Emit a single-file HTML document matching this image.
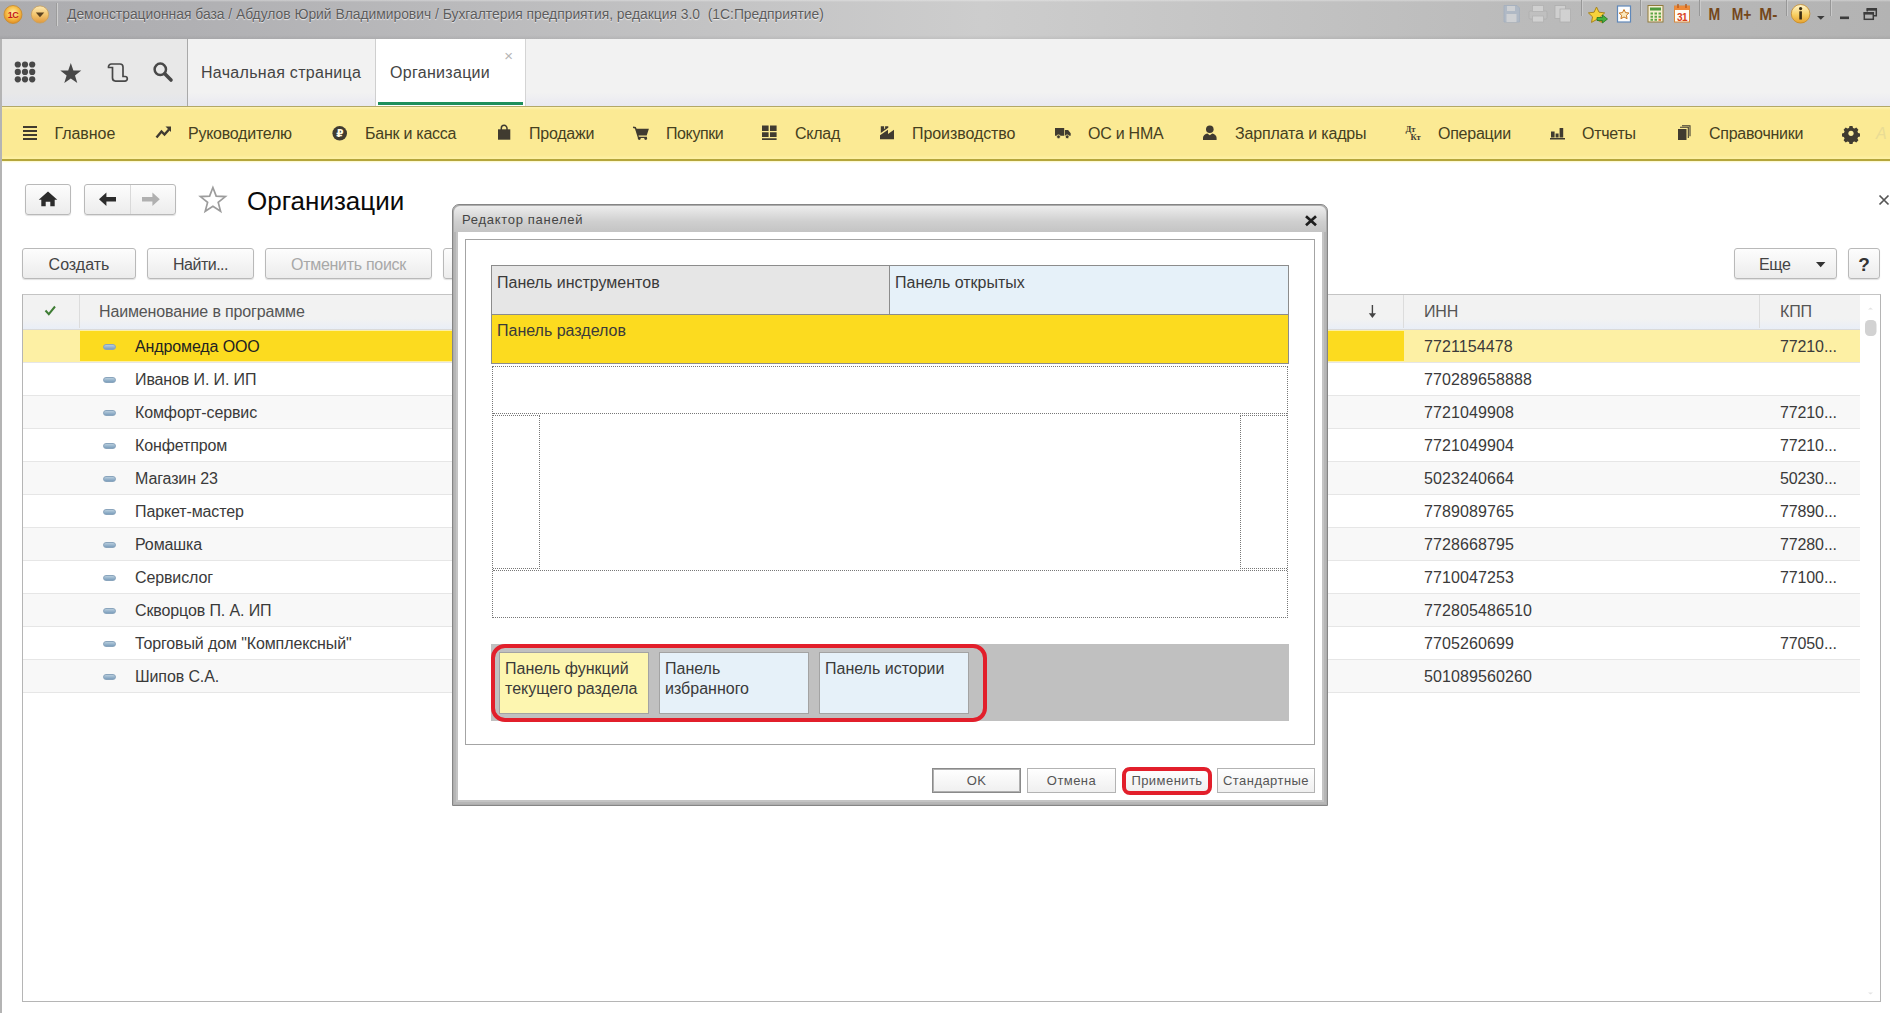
<!DOCTYPE html>
<html lang="ru">
<head>
<meta charset="utf-8">
<title>Организации</title>
<style>
*{box-sizing:border-box;margin:0;padding:0}
html,body{width:1890px;height:1013px;overflow:hidden;background:#fff}
body{font-family:"Liberation Sans",Arial,sans-serif;font-size:16px;color:#333;position:relative}
.abs{position:absolute}
/* title bar */
#titlebar{position:absolute;left:0;top:0;width:1890px;height:39px;background:linear-gradient(rgba(255,255,255,.35),rgba(255,255,255,0) 2px,rgba(0,0,0,0) 35px,rgba(0,0,0,.06)),linear-gradient(to right,#acacaf 0,#b0b0b3 10%,#cdcdcd 52%,#bbbbbb 80%,#b3b3b3 100%);}
#titlebar .t{position:absolute;left:67px;top:6px;font-size:13.85px;line-height:16px;color:#5c5c5c;text-shadow:0 1px 1px rgba(255,255,255,.75);white-space:nowrap}
/* tabs bar */
#tabsbar{position:absolute;left:0;top:39px;width:1890px;height:67px;background:linear-gradient(#f2f2f2 80%,#e9e9f1)}
#leftborder{position:absolute;left:0;top:39px;width:2px;height:974px;background:#b4b4b4}
#tools{position:absolute;left:2px;top:39px;width:186px;height:67px;background:linear-gradient(#e8e8e8 80%,#e3e5ec);border-right:1px solid #a9a9a9}
.tab{position:absolute;top:39px;height:67px;font-size:16px;color:#444;line-height:67px;white-space:nowrap;letter-spacing:.3px}
#tab1{left:188px;width:188px;padding-left:13px;border-right:1px solid #cfcfcf}
#tab2{left:376px;width:150px;background:#fff;padding-left:14px;border-right:1px solid #d4d4d4}
#tab2 .ul{position:absolute;left:2px;right:2px;bottom:1px;height:3px;background:#1e8f5c}
#tab2 .x{position:absolute;right:12px;top:9px;font-size:15px;line-height:15px;color:#b5b5b5;letter-spacing:0}
/* sections */
#sections{position:absolute;left:2px;top:106px;width:1888px;height:55px;background:linear-gradient(#fdf3b4,#fbea94 3px,#fbea94 48px,#fdf0a2 51px);border-top:1px solid #b3a866;border-bottom:2px solid #b5a63c;box-shadow:0 1px 0 #fdf9d2,0 2px 0 #fffef0}
.sec{position:absolute;top:17px;font-size:16px;color:#45401f;white-space:nowrap;line-height:20px;letter-spacing:-.25px}
.sic{position:absolute;top:0;height:54px}
/* content */
.btn{position:absolute;height:31px;border:1px solid #b9b9b9;border-radius:3px;background:linear-gradient(#fdfdfd,#ececec);font-size:16px;color:#444;text-align:center;line-height:31px;box-shadow:0 1px 1px rgba(0,0,0,.12)}
.btn.dis{color:#a8a8a8}
#h1{position:absolute;left:247px;top:185px;font-size:26px;color:#0a0a0a;line-height:32px}
/* table */
#tbl{position:absolute;left:22px;top:294px;width:1859px;height:708px;border:1px solid #b5b5b5;border-top-color:#c4c4c4;background:#fff}
#thead{position:absolute;left:0;top:0;width:1837px;height:35px;background:linear-gradient(#f2f2f2 70%,#e9eef7);border-bottom:1px solid #dadada}
.th{position:absolute;top:0;height:33px;line-height:33px;color:#555;font-size:16px;white-space:nowrap;letter-spacing:-.15px}
.vsep{position:absolute;top:0;width:1px;height:33px;background:#dcdcdc}
.row{position:absolute;left:0;width:1837px;height:33px;border-bottom:1px solid #e6e6e6;font-size:16px;color:#3a3a3a;line-height:34px;white-space:nowrap;letter-spacing:-.12px}
.row.alt{background:#f8f8f8}
.row span{position:absolute;top:0}
.row .n{left:112px}.row .i{left:1401px;letter-spacing:.1px}.row .k{left:1757px}
.row .ic{left:80px;top:14px;width:13px;height:6px;border-radius:3px;background:linear-gradient(#b7cddd,#7d9fbd);border:1px solid #8aa5bd}
/* dialog */
#dlg{position:absolute;left:452px;top:204px;width:876px;height:602px;border-radius:7px 7px 0 0;background:#fff;border:1px solid #858585;box-shadow:inset 0 0 0 1px #adadad, inset 0 0 0 3px #b6b6b6, inset 0 0 0 5px #c4c4c4}
#dlgtitle{position:absolute;left:1px;top:1px;right:1px;height:26px;border-radius:6px 6px 0 0;background:linear-gradient(#ededed,#cfcfcf 60%,#c4c4c4);}
#dlgtitle .t{position:absolute;left:8px;top:6px;font-size:13px;color:#444;line-height:16px;letter-spacing:.7px}
#dlgbody{position:absolute;left:5px;top:29px;right:5px;bottom:5px;background:#fff}
#frame{position:absolute;left:465px;top:239px;width:850px;height:506px;border:1px solid #a4a4a4;background:#fff}
.pn{position:absolute;font-size:16px;color:#3a3a3a;line-height:20px;padding:7px 0 0 5px}
.dot{position:absolute;border:1px dotted #777}
.db{position:absolute;top:768px;height:25px;border:1px solid #b3b3b3;background:linear-gradient(#fff,#efefef);font-size:13px;color:#555;text-align:center;line-height:24px;letter-spacing:.45px;white-space:nowrap}
.red{position:absolute;border:4px solid #e21f2b;border-radius:14px}
</style>
</head>
<body>
<div id="titlebar"><div class="t">Демонстрационная база / Абдулов Юрий Владимирович / Бухгалтерия предприятия, редакция 3.0&nbsp; (1С:Предприятие)</div></div>
<div id="tabsbar"></div>
<div id="tools"></div>
<div class="tab" id="tab1">Начальная страница</div>
<div class="tab" id="tab2">Организации<span class="x">×</span><span class="ul"></span></div>
<div id="sections">
<span class="sec" style="left:52.500px;letter-spacing:-.05px">Главное</span>
<span class="sec" style="left:186px">Руководителю</span>
<span class="sec" style="left:363px">Банк и касса</span>
<span class="sec" style="left:527px">Продажи</span>
<span class="sec" style="left:664px;letter-spacing:-.4px">Покупки</span>
<span class="sec" style="left:793px">Склад</span>
<span class="sec" style="left:910px;letter-spacing:-.08px">Производство</span>
<span class="sec" style="left:1086px">ОС и НМА</span>
<span class="sec" style="left:1233px;letter-spacing:-.15px">Зарплата и кадры</span>
<span class="sec" style="left:1436px">Операции</span>
<span class="sec" style="left:1580px">Отчеты</span>
<span class="sec" style="left:1707px">Справочники</span>
</div>
<div id="leftborder"></div>

<div class="btn" style="left:25px;top:184px;width:46px"></div>
<div class="btn" style="left:84px;top:184px;width:92px"></div>
<div id="h1">Организации</div>

<div class="btn" style="left:22px;top:248px;width:114px">Создать</div>
<div class="btn" style="left:147px;top:248px;width:107px;letter-spacing:-.5px">Найти...</div>
<div class="btn dis" style="left:265px;top:248px;width:167px;letter-spacing:-.3px">Отменить поиск</div>
<div class="btn" style="left:443px;top:248px;width:40px"></div>
<div class="btn" style="left:1734px;top:248px;width:103px;text-align:left;padding-left:24px;letter-spacing:-.3px">Еще</div>
<div class="btn" style="left:1848px;top:248px;width:32px;font-weight:bold;font-size:19px;color:#333">?</div>

<div id="tbl">
 <div id="thead">
  <div class="th" style="left:76px">Наименование в программе</div>
  <div class="th" style="left:1401px">ИНН</div>
  <div class="th" style="left:1757px">КПП</div>
  <div class="vsep" style="left:56px"></div>
  <div class="vsep" style="left:1380px"></div>
  <div class="vsep" style="left:1736px"></div>
 </div>
 <div class="row" style="top:35px;background:#fdf0a4"><div class="abs" style="left:57px;top:1px;width:1324px;height:30px;background:#fcdb1f"></div><span class="ic"></span><span class="n" style="color:#222">Андромеда ООО</span><span class="i">7721154478</span><span class="k">77210...</span></div>
 <div class="row" style="top:68px"><span class="ic"></span><span class="n">Иванов И. И. ИП</span><span class="i">770289658888</span></div>
 <div class="row alt" style="top:101px"><span class="ic"></span><span class="n">Комфорт-сервис</span><span class="i">7721049908</span><span class="k">77210...</span></div>
 <div class="row" style="top:134px"><span class="ic"></span><span class="n">Конфетпром</span><span class="i">7721049904</span><span class="k">77210...</span></div>
 <div class="row alt" style="top:167px"><span class="ic"></span><span class="n">Магазин 23</span><span class="i">5023240664</span><span class="k">50230...</span></div>
 <div class="row" style="top:200px"><span class="ic"></span><span class="n">Паркет-мастер</span><span class="i">7789089765</span><span class="k">77890...</span></div>
 <div class="row alt" style="top:233px"><span class="ic"></span><span class="n">Ромашка</span><span class="i">7728668795</span><span class="k">77280...</span></div>
 <div class="row" style="top:266px"><span class="ic"></span><span class="n">Сервислог</span><span class="i">7710047253</span><span class="k">77100...</span></div>
 <div class="row alt" style="top:299px"><span class="ic"></span><span class="n">Скворцов П. А. ИП</span><span class="i">772805486510</span></div>
 <div class="row" style="top:332px"><span class="ic"></span><span class="n">Торговый дом "Комплексный"</span><span class="i">7705260699</span><span class="k">77050...</span></div>
 <div class="row alt" style="top:365px"><span class="ic"></span><span class="n">Шипов С.А.</span><span class="i">501089560260</span></div>
</div>

<div id="dlg"><div id="dlgtitle"><span class="t">Редактор панелей</span></div></div>
<div id="frame"></div>
<div class="pn" style="left:491px;top:265px;width:399px;height:50px;background:#e6e6e6;border:1px solid #8c8c8c">Панель инструментов</div>
<div class="pn" style="left:889px;top:265px;width:400px;height:50px;background:#e6f1f9;border:1px solid #8c8c8c">Панель открытых</div>
<div class="pn" style="left:491px;top:314px;width:798px;height:50px;background:#fcdb1f;border:1px solid #8c8c8c;padding-top:6px">Панель разделов</div>
<div class="dot" style="left:492px;top:366px;width:796px;height:252px"></div>
<div class="dot" style="left:493px;top:415px;width:47px;height:154px;border-left:none"></div>
<div class="dot" style="left:493px;top:413px;width:794px;height:158px;border-left:none;border-right:none"></div>
<div class="dot" style="left:1240px;top:415px;width:47px;height:154px;border-right:none"></div>

<div class="abs" style="left:491px;top:644px;width:798px;height:77px;background:#c0c0c0"></div>
<div class="pn" style="left:499px;top:652px;width:150px;height:62px;background:#fdf6b0;border:1px solid #a3a3a3;padding-top:6px">Панель функций<br>текущего раздела</div>
<div class="pn" style="left:659px;top:652px;width:150px;height:62px;background:#e6f1f9;border:1px solid #a3a3a3;padding-top:6px">Панель<br>избранного</div>
<div class="pn" style="left:819px;top:652px;width:150px;height:62px;background:#e6f1f9;border:1px solid #a3a3a3;padding-top:6px">Панель истории</div>
<div class="red" style="left:491px;top:644px;width:496px;height:78px"></div>
<div class="db" style="left:932px;width:89px;border-color:#8a8a8a;box-shadow:inset 0 0 0 1px #b0b0b0">OK</div>
<div class="db" style="left:1027px;width:89px">Отмена</div>
<div class="db" style="left:1125px;width:84px">Применить</div>
<div class="db" style="left:1217px;width:98px">Стандартные</div>
<div class="red" style="left:1122px;top:767px;width:90px;height:28px;border-radius:8px"></div>

<svg id="icons" width="1890" height="1013" viewBox="0 0 1890 1013" style="position:absolute;left:0;top:0;pointer-events:none">
<defs>
 <radialGradient id="g1c" cx="50%" cy="40%" r="60%"><stop offset="0" stop-color="#fff0a8"/><stop offset=".55" stop-color="#f8c04a"/><stop offset="1" stop-color="#e08c22"/></radialGradient>
 <linearGradient id="gdd" x1="0" y1="0" x2="0" y2="1"><stop offset="0" stop-color="#fdeab4"/><stop offset=".5" stop-color="#f3c670"/><stop offset="1" stop-color="#e0983c"/></linearGradient>
 <linearGradient id="ginf" x1="0" y1="0" x2="0" y2="1"><stop offset="0" stop-color="#fff6cf"/><stop offset=".55" stop-color="#f7cf63"/><stop offset="1" stop-color="#e6a230"/></linearGradient>
</defs>
<!-- title bar: logo + dropdown -->
<g id="tb-left">
 <circle cx="13" cy="14.5" r="9" fill="url(#g1c)" stroke="#c98a2a" stroke-width=".8"/>
 <text x="13" y="18" font-family="Liberation Sans,sans-serif" font-size="9" font-weight="bold" fill="#c4161c" text-anchor="middle" letter-spacing="-.5">1С</text>
 <circle cx="40" cy="14.5" r="8.6" fill="url(#gdd)" stroke="#c9a05a" stroke-width=".8"/>
 <path d="M35.8 12.6h8.4l-4.2 4.6z" fill="#5b4322"/>
 <path d="M56.5 3v23" stroke="#9c9c9c" stroke-width="1"/><path d="M57.5 3v23" stroke="#cfcfcf" stroke-width="1"/>
</g>
<!-- title bar right icons -->
<g id="tb-right">
 <g opacity=".38">
  <path d="M1504 5.5h13l2.5 2.500v14h-15.5z" fill="#9fb6d6" stroke="#7f9cc4" stroke-width=".8"/><rect x="1507" y="6" width="8" height="5" fill="#eef3fa"/><rect x="1506.500" y="14" width="10" height="8" fill="#eef3fa"/>
  <rect x="1529" y="11" width="18" height="8" rx="1.5" fill="#c9c9c9" stroke="#9a9a9a" stroke-width=".8"/><rect x="1532.500" y="5.500" width="11" height="6" fill="#f4f4f4" stroke="#a5a5a5" stroke-width=".8"/><rect x="1532.500" y="16" width="11" height="6" fill="#f7f7f7" stroke="#a5a5a5" stroke-width=".8"/>
  <rect x="1555" y="5.500" width="10.500" height="13" fill="#f2f2f2" stroke="#9c9c9c" stroke-width=".8"/><rect x="1560" y="9" width="10.500" height="13" fill="#f7f7f7" stroke="#9c9c9c" stroke-width=".8"/>
 </g>
 <path d="M1581.500 0v16M1640.500 0v16M1699.500 0v16M1786.500 0v16M1830.500 0v16" stroke="#979797" stroke-width="1"/>
 <path d="M1582.500 0v16M1641.500 0v16M1700.500 0v16M1787.500 0v16M1831.500 0v16" stroke="#d2d2d2" stroke-width="1" opacity=".7"/>
 <!-- star + green arrow -->
 <path d="M1596.500 7l2.500 5.200 5.700.7-4.200 3.900 1.100 5.600-5.100-2.800-5 2.800 1-5.600-4.100-3.900 5.700-.7z" fill="#f6d23a" stroke="#a8841c" stroke-width="1"/>
 <path d="M1597 17.500h5.500v-2.500l5 4-5 4v-2.500h-5.500z" fill="#46b03c" stroke="#22761c" stroke-width=".8"/>
 <!-- favourites doc -->
 <rect x="1617.500" y="6" width="13" height="16" fill="#fdfdfd" stroke="#5f88ba" stroke-width="1.200"/>
 <path d="M1624 9.500l1.500 3.100 3.400.4-2.500 2.300.7 3.400-3.100-1.700-3.100 1.700.7-3.400-2.500-2.300 3.400-.4z" fill="#fbe9c0" stroke="#c9761e" stroke-width="1"/>
 <!-- calculator -->
 <rect x="1648" y="5.500" width="15" height="16.500" fill="#f6eed0" stroke="#8f7a3c" stroke-width="1"/>
 <rect x="1650" y="7.500" width="11" height="3" fill="#4f9a3c"/>
 <path d="M1650.500 12.500h2.500v2h-2.500zM1654.500 12.500h2.500v2h-2.500zM1658.500 12.500h2.500v2h-2.500zM1650.500 15.700h2.500v2h-2.500zM1654.500 15.700h2.500v2h-2.500zM1658.500 15.700h2.500v2h-2.500zM1650.500 18.800h2.500v2h-2.500zM1654.500 18.800h2.500v2h-2.500z" fill="#5da545"/><path d="M1658.500 18.800h2.500v2h-2.500z" fill="#d8702a"/>
 <!-- calendar -->
 <rect x="1674.500" y="6" width="15" height="16" fill="#fffdf6" stroke="#d9883a" stroke-width="1"/>
 <rect x="1674.500" y="6" width="15" height="4" fill="#ee8a3a"/>
 <path d="M1678 4v4M1686 4v4" stroke="#b85a1a" stroke-width="1.400"/>
 <text x="1682" y="20.500" font-family="Liberation Sans,sans-serif" font-size="10" font-weight="bold" fill="#d8401c" text-anchor="middle" letter-spacing="-.6">31</text>
 <!-- M M+ M- -->
 <g font-family="Liberation Sans,sans-serif" font-size="16" font-weight="bold" fill="#74471b">
  <text x="1708.500" y="20" textLength="11.700" lengthAdjust="spacingAndGlyphs">M</text><text x="1731.800" y="20" textLength="19.600" lengthAdjust="spacingAndGlyphs">M+</text><text x="1759.300" y="20" textLength="18" lengthAdjust="spacingAndGlyphs">M-</text>
 </g>
 <!-- info -->
 <circle cx="1800.600" cy="13.800" r="9.300" fill="url(#ginf)" stroke="#c58a28" stroke-width=".8"/>
 <circle cx="1800.600" cy="8.600" r="1.600" fill="#3a2c14"/><rect x="1799.300" y="11.300" width="2.600" height="8.200" fill="#3a2c14"/>
 <path d="M1817 16h7.600l-3.800 3.800z" fill="#3c3c3c"/>
 <rect x="1840" y="16.500" width="9" height="2.600" fill="#3c3c3c"/>
 <path d="M1867.300 11.500v-2.700h9v7h-2.500" fill="none" stroke="#3c3c3c" stroke-width="1.500"/><path d="M1866.600 8.500h10.400v2.200h-10.400z" fill="#3c3c3c"/>
 <rect x="1864.300" y="12.800" width="9" height="6.500" fill="none" stroke="#3c3c3c" stroke-width="1.500"/><path d="M1863.600 12h10.400v2.600h-10.400z" fill="#3c3c3c"/>
</g>
<!-- tools -->
<g id="tools-ic" fill="#484848">
 <g><circle cx="17.800" cy="64.500" r="3.100"/><circle cx="25" cy="64.500" r="3.100"/><circle cx="32.200" cy="64.500" r="3.100"/><circle cx="17.800" cy="71.900" r="3.100"/><circle cx="25" cy="71.900" r="3.100"/><circle cx="32.200" cy="71.900" r="3.100"/><circle cx="17.800" cy="79.300" r="3.100"/><circle cx="25" cy="79.300" r="3.100"/><circle cx="32.200" cy="79.300" r="3.100"/></g>
 <path d="M70.800 63l2.600 7.400 7.900.2-6.300 4.800 2.300 7.600-6.500-4.500-6.500 4.500 2.300-7.600-6.300-4.800 7.900-.2z"/>
 <path d="M108.500 67.500a3 3 0 0 1 3-3.500h8.500a3 3 0 0 1 3 3v9.500h2a2.300 2.300 0 0 1 0 4.600h-9.500a3 3 0 0 1-3-3v-10.600z" fill="none" stroke="#484848" stroke-width="1.700"/>
 <circle cx="160.300" cy="69.300" r="5.700" fill="none" stroke="#484848" stroke-width="2.500"/>
 <path d="M164.800 73.800l6.200 6.200" stroke="#484848" stroke-width="3.600" stroke-linecap="round"/>
</g>
<!-- sections icons -->
<g id="sec-ic" fill="#403b30">
 <path d="M23 126h14v2h-14zM23 130h14v2h-14zM23 134h14v2h-14zM23 138h14v2h-14z"/>
 <path d="M156.500 137.500l5-6 3 3 4.500-5" fill="none" stroke="#403b30" stroke-width="2.400"/><path d="M165.500 126.500h5.500v5.500z"/>
 <circle cx="339.700" cy="133.300" r="7.300"/>
 <text x="339.800" y="137.300" font-family="DejaVu Sans,Liberation Sans,sans-serif" font-size="10.500" font-weight="bold" fill="#fffbe6" text-anchor="middle">₽</text>
 <path d="M498 129.300h12.300v10.400h-12.300z"/><path d="M501.300 130.500v-2.300a2.850 2.850 0 0 1 5.700 0v2.300" fill="none" stroke="#403b30" stroke-width="1.500"/>
 <path d="M633.200 126.400l2.600.7.800 1.700h12.300l-2.200 6.700h-8.200l.4 1.200h8v1.300h-9l-3-9.500-2-.6z"/><circle cx="639.300" cy="138.600" r="1.400"/><circle cx="645.700" cy="138.600" r="1.400"/>
 <path d="M762 125.500h6.600v5.500h-6.600zM770 125.500h6.600v5.500h-6.600zM762 132.200h6.600v4.800h-6.600zM770 132.200h6.600v4.800h-6.600zM762 138.200h14.600v1.800h-14.600z"/>
 <path d="M880.800 126.200h3.300v2.600h1v-2.600h3.200v1.500l-7.500 5.300zM880 135.300l8-5.500v4.300l6-4.400v9.600h-14z"/>
 <path d="M1055 128.100h9.200v7.700h-9.200zM1064.900 130h3.200l2.600 3.200v2.600h-5.800z"/><circle cx="1058.500" cy="136.800" r="1.900" stroke="#fbea94" stroke-width=".8"/><circle cx="1067.200" cy="136.800" r="1.900" stroke="#fbea94" stroke-width=".8"/>
 <circle cx="1209.800" cy="129.300" r="3.800"/><path d="M1203 140v-2.200c0-2.300 2.200-3.800 4.300-4.200l2.500 1.700 2.500-1.700c2.100.4 4.300 1.900 4.300 4.200v2.200z"/>
 <g font-family="Liberation Serif,serif" font-size="8.500" font-weight="bold"><text x="1405.500" y="132">Дт</text><text x="1410.500" y="140">Кт</text></g>
 <path d="M1551 131.500h3.600v6h-3.600zM1555.600 133.500h3v4h-3zM1559.600 128h3.600v9.500h-3.600zM1550 138h15v1.500h-15z"/>
 <path d="M1678 129h8.500v11h-8.500z"/><path d="M1680 127.300h8.300v10.700M1682 125.700h8v10.500" fill="none" stroke="#403b30" stroke-width="1.100"/>
 <g transform="translate(1851 133.300)"><path d="M-1.500-7.300h3l.5 1.900 1.600.7 1.700-1 2.100 2.100-1 1.700.7 1.600 1.900.5v3l-1.900.5-.7 1.600 1 1.700-2.100 2.100-1.700-1-1.600.7-.5 1.900h-3l-.5-1.900-1.600-.7-1.700 1-2.100-2.100 1-1.700-.7-1.600-1.900-.5v-3l1.900-.5.700-1.600-1-1.700 2.100-2.100 1.700 1 1.600-.7z"/><circle r="2.600" fill="#fbed9e"/></g>
 <text x="1876" y="139" font-family="Liberation Sans,sans-serif" font-size="16" font-style="italic" fill="#e9dc95">А</text>
</g>
<!-- misc icons -->
<g id="misc">
 <path d="M45.500 310.500l3.300 3.600 6.200-7.600" fill="none" stroke="#3f7d35" stroke-width="2"/>
 <path d="M1372.400 305v9.500" stroke="#444" stroke-width="1.400"/><path d="M1368.800 313.300h7.200l-3.600 4.600z" fill="#444"/>
 <path d="M1306 216.200l10 9M1316 216.200l-10 9" stroke="#1e1e1e" stroke-width="2.700"/>
 <path d="M1879.500 195.500l9 9M1888.500 195.500l-9 9" stroke="#555" stroke-width="1.700"/>
 <path d="M1816 262h9.400l-4.700 5.300z" fill="#333"/>
 <rect x="1865" y="320" width="11.500" height="16" rx="4.500" fill="#d2d2d2"/>
 <path d="M1868 309.500l2.500-2 2.500 2z" fill="#e3e3e3"/>
 <path d="M1868 992.500l2.500 2 2.500-2z" fill="#e3e3e3"/>
</g>
<!-- page header icons -->
<g id="hdr-ic">
 <path d="M48 191.600l9.300 8.200h-2.600v6.400h-4.400v-4.400h-4.600v4.400h-4.400v-6.400h-2.600z" fill="#2c2c2c"/>
 <path d="M130.500 185v29" stroke="#d9d9d9" stroke-width="1"/>
 <path d="M99 199.300l7.400-6.700v4.400h9.600v4.600h-9.600v4.400z" fill="#2c2c2c"/>
 <path d="M159.800 199.300l-7.400-6.700v4.400h-10.400v4.600h10.400v4.400z" fill="#b0b0b0"/>
 <path d="M212.900 187.500l3.300 8.600 9.200.5-7.200 5.800 2.400 8.900-7.700-5-7.700 5 2.400-8.900-7.200-5.800 9.200-.5z" fill="#fff" stroke="#9c9c9c" stroke-width="1.700" stroke-linejoin="miter"/>
</g>
</svg>
</body>
</html>
